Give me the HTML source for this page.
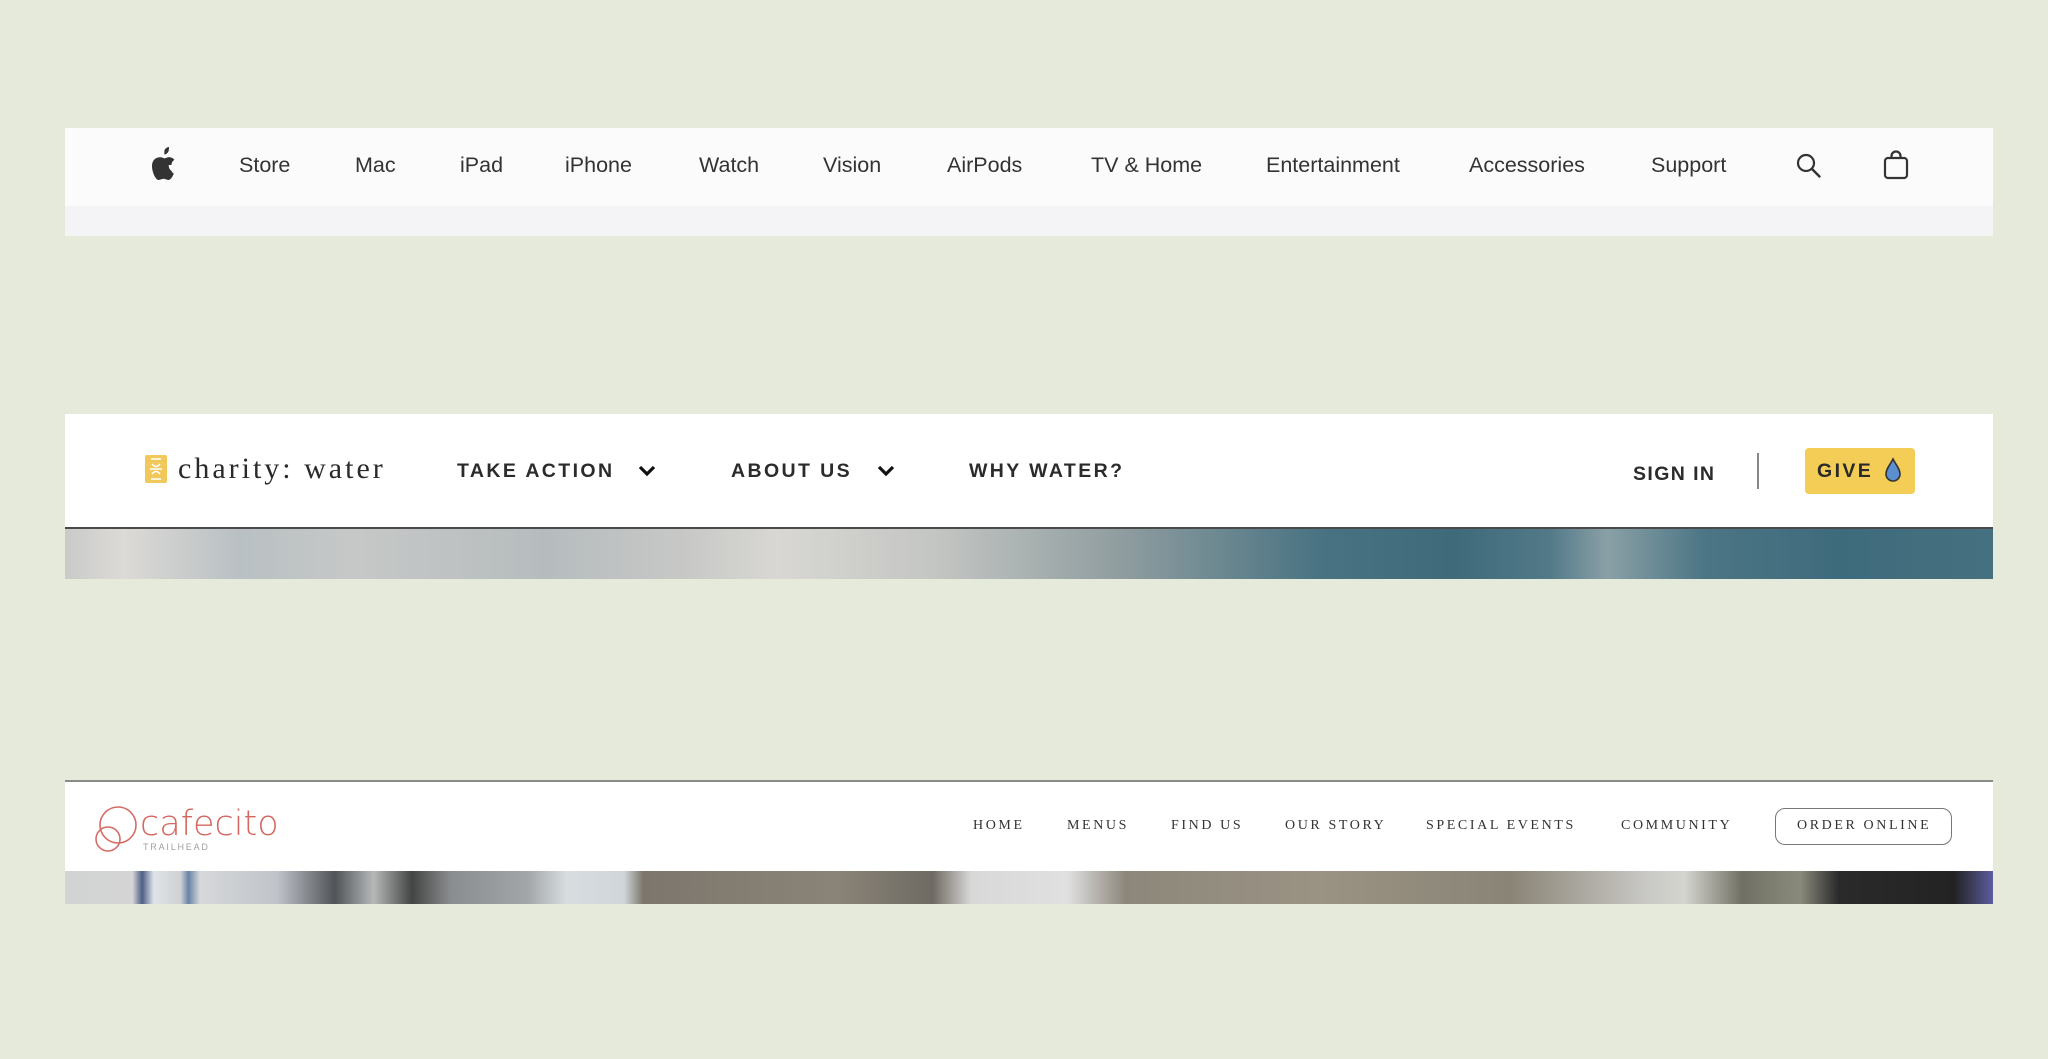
<!DOCTYPE html>
<html><head><meta charset="utf-8"><style>
*{margin:0;padding:0;box-sizing:border-box}
body{width:2048px;height:1059px;background:#e6eadb;position:relative;overflow:hidden;font-family:"Liberation Sans",sans-serif}
.a{position:absolute;white-space:nowrap}
.ap{color:#333;font-size:21.5px;top:152px;line-height:26px}
.cw{color:#2b2b2b;font-size:19.5px;font-weight:bold;letter-spacing:2.4px;top:459px;line-height:24px}
.cf{font-family:"Liberation Serif",serif;color:#333;font-size:14px;letter-spacing:2.6px;top:817px;line-height:18px}
</style></head><body>
<div class="a" style="left:65px;top:128px;width:1928px;height:78px;background:#fbfbfc"></div>
<div class="a" style="left:65px;top:206px;width:1928px;height:30px;background:#f4f4f6"></div>
<svg class="a" style="left:151px;top:146px" width="26" height="36" viewBox="0 0 26 36"><path fill="#333" d="M13.5 8.5c1.4-0.1 3.4-1.5 4-3.3 0.5-1.5 0.5-3.2 0.5-4.2-1.8 0.2-3.6 1.2-4.3 2.8-0.6 1.3-0.4 3.2-0.2 4.7zM20.5 19c0-3.5 2.7-5 2.9-5.1-1.6-2.5-4.1-2.7-5-2.7-2.1-0.2-3.8 1.2-4.9 1.2-1 0-2.600-1.2-4.3-1.1C6.7 11.3 1 12.5 1 20.3c0 5 3.2 13.8 6.8 13.700 1.6 0 2.7-1.2 4.8-1.2 2 0 3 1.2 4.8 1.2 2.2 0 4.4-3.5 5.4-6.5-1.8-0.8-2.3-2.6-2.3-2.6-2-1.3-2.8-3.4-2.8-5.9z"/></svg>
<div class="a ap" style="left:239px">Store</div>
<div class="a ap" style="left:355px">Mac</div>
<div class="a ap" style="left:460px">iPad</div>
<div class="a ap" style="left:565px">iPhone</div>
<div class="a ap" style="left:699px">Watch</div>
<div class="a ap" style="left:823px">Vision</div>
<div class="a ap" style="left:947px">AirPods</div>
<div class="a ap" style="left:1091px">TV &amp; Home</div>
<div class="a ap" style="left:1266px">Entertainment</div>
<div class="a ap" style="left:1469px">Accessories</div>
<div class="a ap" style="left:1651px">Support</div>
<svg class="a" style="left:1795px;top:152px" width="28" height="28" viewBox="0 0 28 28"><circle cx="11" cy="11" r="8" fill="none" stroke="#333" stroke-width="2.2"/><path d="M17 17l7.5 7.5" stroke="#333" stroke-width="2.4" stroke-linecap="round"/></svg>
<svg class="a" style="left:1883px;top:150px" width="26" height="30" viewBox="0 0 26 30"><rect x="2" y="8" width="22" height="20" rx="3" fill="none" stroke="#333" stroke-width="2.2"/><path d="M8.5 8V6a4.5 4.5 0 0 1 9 0v2" fill="none" stroke="#333" stroke-width="2.2"/></svg>

<div class="a" style="left:65px;top:414px;width:1928px;height:114px;background:#fff"></div>
<div class="a" style="left:65px;top:527px;width:1928px;height:2px;background:#4a4a4a"></div>
<div class="a" style="left:65px;top:529px;width:1928px;height:50px;background:linear-gradient(90deg,#c9cbc9 0%,#dcdad6 3%,#b9c0c3 9%,#c6c8c7 15%,#b6bcbe 25%,#c7c8c6 32%,#d8d7d3 37%,#c4c6c3 45%,#8e9c9f 55%,#497382 65%,#3e6a7a 72%,#527988 77%,#8aa0a6 80%,#4c7585 85%,#3e6b7c 92%,#45707f 100%)"></div>
<svg class="a" style="left:145px;top:455px" width="22" height="28" viewBox="0 0 22 28"><rect x="0" y="0" width="22" height="28" rx="2" fill="#f1c95a"/><path d="M6 4h10M6 24h10M7 9q4 5 8 0M7 19q4-5 8 0M5 14h12" stroke="#fff" stroke-width="1.6" fill="none"/></svg>
<div class="a" style="left:178px;top:451px;font-family:'Liberation Serif',serif;font-size:30px;letter-spacing:3px;color:#2a2a2a;line-height:36px">charity: water</div>
<div class="a cw" style="left:457px">TAKE ACTION</div>
<svg class="a" style="left:638px;top:464px" width="18" height="14" viewBox="0 0 18 14"><path d="M2 3l7 7 7-7" stroke="#111" stroke-width="3.2" fill="none"/></svg>
<div class="a cw" style="left:731px">ABOUT US</div>
<svg class="a" style="left:877px;top:464px" width="18" height="14" viewBox="0 0 18 14"><path d="M2 3l7 7 7-7" stroke="#111" stroke-width="3.2" fill="none"/></svg>
<div class="a cw" style="left:969px">WHY WATER?</div>
<div class="a cw" style="left:1633px;top:462px;letter-spacing:1.4px">SIGN IN</div>
<div class="a" style="left:1757px;top:453px;width:2px;height:36px;background:#888"></div>
<div class="a" style="left:1805px;top:448px;width:110px;height:46px;background:#f3cd55;border-radius:4px"></div>
<div class="a cw" style="left:1817px;top:459px;color:#2a2a2a">GIVE</div>
<svg class="a" style="left:1884px;top:457px" width="18" height="26" viewBox="0 0 18 26"><path d="M9 2C6 8 2 12 2 17a7 7 0 0 0 14 0c0-5-4-9-7-15z" fill="#5c8fd0" stroke="#333" stroke-width="1.6"/></svg>

<div class="a" style="left:65px;top:780px;width:1928px;height:2px;background:#8a8a86"></div>
<div class="a" style="left:65px;top:782px;width:1928px;height:89px;background:#fff"></div>
<div class="a" style="left:65px;top:871px;width:1928px;height:33px;background:linear-gradient(90deg,#d2d3d3 0%,#d4d4d4 3.5%,#4d5e86 4%,#dfe3e8 4.6%,#cfd1d3 6%,#6882a6 6.4%,#d6d8da 7%,#c0c4ca 11%,#505458 14%,#b6b8b8 16%,#444 18%,#8a8d90 20%,#a2a6a8 24%,#d8dde0 26%,#cfd5d9 29%,#7c766c 30%,#8a8478 40%,#6f6a62 45%,#d8d8d8 47%,#e0e0e0 52%,#8d877b 55%,#9a9384 65%,#8a8476 75%,#c8c8c4 82%,#d5d5d0 84%,#707064 87%,#8a8a7c 90%,#2a2a2a 92%,#232323 98%,#5c5ca0 100%)"></div>
<svg class="a" style="left:92px;top:804px" width="50" height="50" viewBox="0 0 50 50"><g fill="none" stroke="#d46d66" stroke-width="1.6"><circle cx="26" cy="21" r="18"/><circle cx="16" cy="35" r="12"/></g></svg>
<div class="a" style="left:140px;top:802px;font-family:'DejaVu Sans',sans-serif;font-weight:200;font-size:35px;color:#d4675f;line-height:44px">cafecito</div>
<div class="a" style="left:143px;top:842px;font-size:9px;letter-spacing:1.8px;color:#a0a0a0;line-height:11px">TRAILHEAD</div>
<div class="a cf" style="left:973px">HOME</div>
<div class="a cf" style="left:1067px">MENUS</div>
<div class="a cf" style="left:1171px">FIND US</div>
<div class="a cf" style="left:1285px">OUR STORY</div>
<div class="a cf" style="left:1426px">SPECIAL EVENTS</div>
<div class="a cf" style="left:1621px">COMMUNITY</div>
<div class="a" style="left:1775px;top:808px;width:177px;height:37px;border:1.5px solid #777;border-radius:10px"></div>
<div class="a cf" style="left:1797px">ORDER ONLINE</div>
</body></html>
